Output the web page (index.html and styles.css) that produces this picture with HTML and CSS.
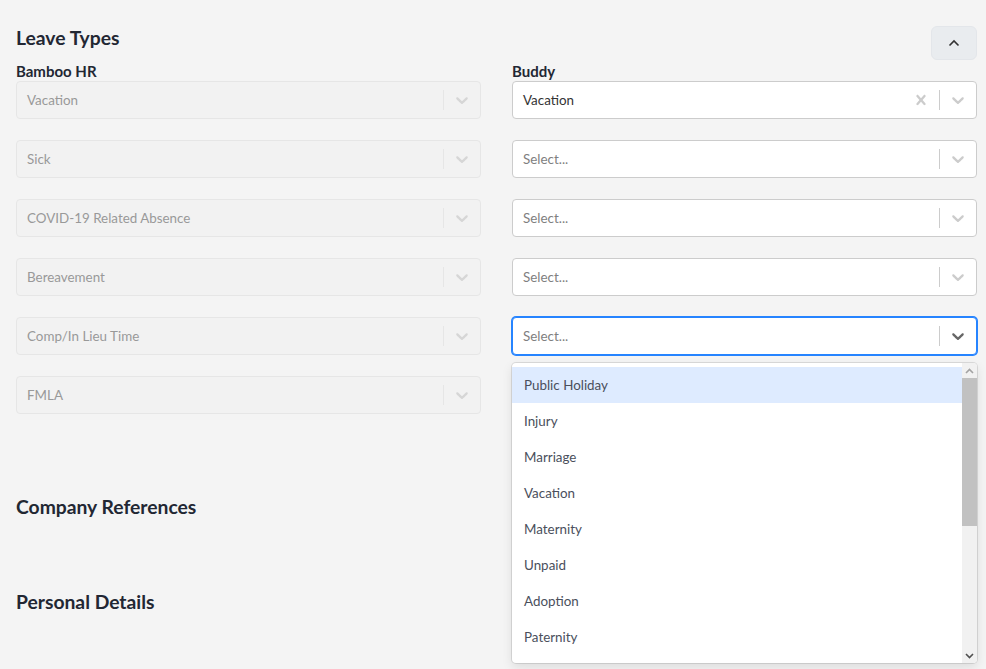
FILE: index.html
```html
<!DOCTYPE html>
<html lang="en">
<head>
  <meta charset="UTF-8" />
  <meta name="viewport" content="width=device-width, initial-scale=1.0" />
  <title>Integrations | Leave Types</title>
  <link rel="stylesheet" href="styles.css">
</head>
<body>
  <main class="page">
    <section class="section">
      <div class="section-head">
        <h2>Leave Types</h2>
        <button type="button" class="collapse-btn" aria-label="Collapse">
          <svg width="12" height="8" viewBox="0 0 12 8"><path d="M1.5 6.5 6 2l4.5 4.5" fill="none" stroke="#333" stroke-width="1.6"/></svg>
        </button>
      </div>

      <div class="mapping">
        <div class="column" id="bamboo-col">
          <div class="col-label">Bamboo HR</div>
        </div>
        <div class="column" id="buddy-col">
          <div class="col-label">Buddy</div>
        </div>
      </div>
    </section>

    <section class="section collapsed first-collapsed">
      <div class="section-head">
        <h2>Company References</h2>
      </div>
    </section>

    <section class="section collapsed">
      <div class="section-head">
        <h2>Personal Details</h2>
      </div>
    </section>
  </main>

  <script>
    const bambooTypes = ['Vacation', 'Sick', 'COVID-19 Related Absence', 'Bereavement', 'Comp/In Lieu Time', 'FMLA'];
    const buddyValues = ['Vacation', null, null, null, null, null];
    const buddyOptions = ['Public Holiday', 'Injury', 'Marriage', 'Vacation', 'Maternity', 'Unpaid', 'Adoption', 'Paternity',
      'Sick', 'Bereavement', 'Jury Duty', 'Study Leave', 'Compassionate', 'Long Service', 'Other'];
    const openRow = 4;

    const chevron = '<svg width="20" height="20" viewBox="0 0 20 20"><path d="M4.516 7.548c0.436-0.446 1.043-0.481 1.576 0l3.908 3.747 3.908-3.747c0.533-0.481 1.141-0.446 1.574 0 0.436 0.445 0.408 1.197 0 1.615-0.406 0.418-4.695 4.502-4.695 4.502-0.217 0.223-0.502 0.335-0.787 0.335s-0.57-0.112-0.789-0.335c0 0-4.287-4.084-4.695-4.502s-0.436-1.17 0-1.615z"/></svg>';
    const cross = '<svg width="20" height="20" viewBox="0 0 20 20"><path d="M14.348 14.849c-0.469 0.469-1.229 0.469-1.697 0l-2.651-3.030-2.651 3.029c-0.469 0.469-1.229 0.469-1.697 0-0.469-0.469-0.469-1.229 0-1.697l2.758-3.15-2.759-3.152c-0.469-0.469-0.469-1.228 0-1.697s1.228-0.469 1.697 0l2.652 3.031 2.651-3.031c0.469-0.469 1.228-0.469 1.697 0s0.469 1.229 0 1.697l-2.758 3.152 2.758 3.150c0.469 0.469 0.469 1.229 0 1.698z"/></svg>';

    function makeSelect(text, opts) {
      const wrap = document.createElement('div');
      wrap.className = 'select';
      if (opts.disabled) wrap.classList.add('disabled');
      if (opts.focused) wrap.classList.add('focused');

      const value = text
        ? `<div class="select-value">${text}</div>`
        : `<div class="select-value placeholder">Select...</div>`;
      const clear = (text && !opts.disabled) ? `<div class="indicator clear">${cross}</div>` : '';

      wrap.innerHTML = `
        <div class="select-control">
          ${value}
          <div class="indicators">
            ${clear}
            <span class="separator"></span>
            <div class="indicator">${chevron}</div>
          </div>
        </div>`;
      return wrap;
    }

    const bambooCol = document.getElementById('bamboo-col');
    const buddyCol = document.getElementById('buddy-col');

    bambooTypes.forEach((type, i) => {
      bambooCol.appendChild(makeSelect(type, { disabled: true }));
      const sel = makeSelect(buddyValues[i], { focused: i === openRow });
      if (i === openRow) {
        const menu = document.createElement('div');
        menu.className = 'menu';
        const list = document.createElement('div');
        list.className = 'menu-list';
        buddyOptions.forEach((opt, j) => {
          const o = document.createElement('div');
          o.className = 'option' + (j === 0 ? ' active' : '');
          o.textContent = opt;
          list.appendChild(o);
        });
        menu.appendChild(list);
        const bar = document.createElement('div');
        bar.className = 'scrollbar';
        bar.innerHTML = `
          <div class="scroll-arrow up"><svg width="9" height="6" viewBox="0 0 9 6"><path d="M1 5 4.5 1.5 8 5" fill="none" stroke="#a3a3a3" stroke-width="1.6"/></svg></div>
          <div class="scroll-track"><div class="scroll-thumb"></div></div>
          <div class="scroll-arrow down"><svg width="9" height="6" viewBox="0 0 9 6"><path d="M1 1 4.5 4.5 8 1" fill="none" stroke="#505050" stroke-width="1.6"/></svg></div>`;
        menu.appendChild(bar);
        sel.appendChild(menu);
      }
      buddyCol.appendChild(sel);
    });
  </script>
</body>
</html>
```

FILE: styles.css
```css
body {
  margin: 0;
  background-color: #f4f4f4;
  font-family: Lato, "Open Sans", sans-serif;
  color: #333;
}
.page {
  min-height: 669px;
  box-sizing: border-box;
  padding: 24px 9px 0 16px;
}
.section-head {
  display: flex;
  justify-content: space-between;
  align-items: flex-start;
}
.section-head h2 {
  margin: 0;
  font-size: 19.3px;
  line-height: 28px;
  font-weight: 700;
  color: #222733;
}
.collapse-btn {
  width: 46px;
  height: 34px;
  margin-top: 2px;
  padding: 0;
  border: 1px solid #e3e6ea;
  border-radius: 6px;
  background-color: #e9ecef;
  display: flex;
  align-items: center;
  justify-content: center;
  cursor: pointer;
}
.mapping {
  display: grid;
  grid-template-columns: 1fr 1fr;
  column-gap: 31px;
  margin-top: 1px;
}
.column {
  display: flex;
  flex-direction: column;
  gap: 21px;
}
.col-label {
  font-size: 15px;
  font-weight: 700;
  line-height: 20px;
  color: #222733;
  margin-bottom: -21px;
}
.select {
  position: relative;
  font-size: 13.4px;
}
.select-control {
  display: flex;
  align-items: center;
  height: 38px;
  box-sizing: border-box;
  background-color: #fff;
  border: 1px solid #ccc;
  border-radius: 4px;
}
.select-value {
  flex: 1;
  padding: 0 10px;
  color: #333;
  white-space: nowrap;
  overflow: hidden;
}
.select-value.placeholder {
  color: #808080;
}
.indicators {
  display: flex;
  align-items: center;
  align-self: stretch;
}
.separator {
  width: 1px;
  align-self: stretch;
  margin: 8px 0;
  background-color: #ccc;
}
.indicator {
  display: flex;
  padding: 8px;
  fill: #ccc;
}
.select.disabled .select-control {
  background-color: #f2f2f2;
  border-color: #e6e6e6;
}
.select.disabled .select-value {
  color: #999;
}
.select.disabled .separator {
  background-color: #e6e6e6;
}
.select.disabled .indicator {
  fill: #d6d6d6;
}
.select.focused .select-control {
  border-color: #2684ff;
  box-shadow: 0 0 0 1px #2684ff;
}
.select.focused .indicator {
  fill: #666;
}
.menu {
  position: absolute;
  top: 100%;
  left: 0;
  right: 0;
  margin-top: 8px;
  height: 300px;
  display: flex;
  background-color: #fff;
  border-radius: 4px;
  box-shadow: 0 0 0 1px rgba(0,0,0,0.1), 0 4px 11px rgba(0,0,0,0.1);
  overflow: hidden;
  z-index: 5;
}
.menu-list {
  flex: 1;
  padding: 4px 0;
  overflow: hidden;
}
.option {
  padding: 8px 12px;
  line-height: 20px;
  color: #4a4f5c;
}
.option.active {
  background-color: #deebff;
}
.scrollbar {
  width: 15px;
  display: flex;
  flex-direction: column;
  background-color: #f1f1f1;
}
.scroll-arrow {
  height: 15px;
  display: flex;
  align-items: center;
  justify-content: center;
}
.scroll-track {
  flex: 1;
}
.scroll-thumb {
  height: 148px;
  background-color: #c1c1c1;
}
.collapsed .section-head {
  height: 34px;
  align-items: center;
}
.first-collapsed {
  margin-top: 76px;
}
.collapsed + .collapsed {
  margin-top: 61px;
}
```
